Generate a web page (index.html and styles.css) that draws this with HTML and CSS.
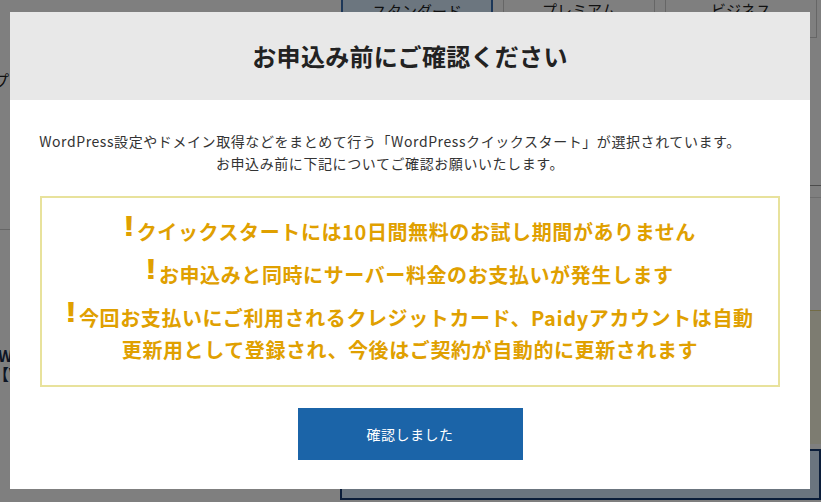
FILE: index.html
```html
<!DOCTYPE html>
<html lang="ja">
<head>
    <meta charset="UTF-8">
    <meta name="viewport" content="width=device-width, initial-scale=1.0">
    <title>お申込み前にご確認ください</title>
    <link rel="stylesheet" href="styles.css">
</head>
<body>
    <div class="page">
        <div class="side-left">
            <p class="cut-text top">プ</p>
            <div class="rule"></div>
            <p class="cut-text bold w1">W</p>
            <p class="cut-text bold w2">【V</p>
        </div>
        <div class="side-right">
            <div class="tabs">
                <div class="tab active">スタンダード</div>
                <div class="tab">プレミアム</div>
                <div class="tab">ビジネス</div>
            </div>
            <div class="rule dark r1"></div>
            <div class="rule r2"></div>
            <div class="note-box"></div>
            <div class="plan-box"></div>
        </div>
    </div>

    <div class="overlay">
        <div class="modal">
            <div class="modal-head">
                <h2>お申込み前にご確認ください</h2>
            </div>
            <div class="modal-body">
                <p class="lead">WordPress設定やドメイン取得などをまとめて行う「WordPressクイックスタート」が選択されています。<br>お申込み前に下記についてご確認お願いいたします。</p>
                <div class="warn-box">
                    <p><span class="mark">!</span>クイックスタートには10日間無料のお試し期間がありません</p>
                    <p><span class="mark">!</span>お申込みと同時にサーバー料金のお支払いが発生します</p>
                    <p><span class="mark">!</span>今回お支払いにご利用されるクレジットカード、Paidyアカウントは自動<br>更新用として登録され、今後はご契約が自動的に更新されます</p>
                </div>
                <button class="btn-ok">確認しました</button>
            </div>
        </div>
    </div>
</body>
</html>
```

FILE: styles.css
```css
body {
    margin: 0;
    font-family: "Noto Sans CJK JP", "Noto Sans", sans-serif;
    color: #222;
    overflow: hidden;
}
.page {
    display: grid;
    grid-template-columns: 340px 1fr;
    height: 502px;
    overflow: hidden;
    background: #fff;
}
.side-left {
    display: flex;
    flex-direction: column;
}
.cut-text {
    margin: 0;
    font-size: 16px;
    line-height: 18px;
    white-space: nowrap;
}
.cut-text.top {
    margin-top: 71px;
    margin-left: -7px;
}
.side-left .rule {
    margin-top: 140px;
    height: 1px;
    background: #ccc;
}
.cut-text.bold {
    font-weight: bold;
    color: #1a2a48;
}
.cut-text.w1 {
    margin-top: 116px;
    margin-left: -2px;
}
.cut-text.w2 {
    margin-left: -7px;
}
.side-right {
    display: flex;
    flex-direction: column;
}
.tabs {
    display: flex;
    gap: 10px;
    margin-top: -22px;
    padding-left: 1px;
}
.tab {
    width: 152px;
    height: 60px;
    flex-shrink: 0;
    box-sizing: border-box;
    border: 1px solid #ccc;
    text-align: center;
    font-size: 15px;
    padding-top: 20px;
}
.tab.active {
    background: #d8ecff;
    border: 2px solid #3a6fb0;
}
.side-right .rule {
    height: 1px;
    background: #ddd;
}
.side-right .rule.dark {
    background: #999;
}
.r1 {
    margin-top: 147px;
}
.r2 {
    margin-top: 11px;
}
.note-box {
    margin-top: 112px;
    height: 133px;
    background: #fbf8e2;
    border-top: 1px solid #e6d98a;
}
.plan-box {
    margin-top: 5px;
    height: 47px;
    background: #d6eaff;
    border: 2px solid #173a72;
}

.overlay {
    position: fixed;
    inset: 0;
    background: rgba(0, 0, 0, 0.5);
}
.modal {
    position: absolute;
    left: 10px;
    top: 12px;
    width: 800px;
    background: #fff;
}
.modal-head {
    background: #e8e8e8;
    height: 88px;
    display: flex;
    align-items: center;
    justify-content: center;
}
.modal-head h2 {
    margin: 0 0 2px;
    font-size: 24px;
    font-weight: bold;
    color: #222;
    letter-spacing: 0.3px;
}
.modal-body {
    padding: 30px 30px 29px;
    display: flex;
    flex-direction: column;
    align-items: center;
}
.lead {
    margin: 0 40px 0 0;
    white-space: nowrap;
    font-size: 14px;
    line-height: 22px;
    color: #333;
    text-align: center;
    letter-spacing: 0.58px;
}
.warn-box {
    margin-top: 22px;
    width: 740px;
    box-sizing: border-box;
    border: 2px solid #e8e29c;
    padding: 18px 10px 19px;
    text-align: center;
}
.warn-box p {
    margin: 0 0 11px;
    font-size: 20px;
    line-height: 32px;
    font-weight: bold;
    color: #e0a000;
    letter-spacing: 0.6px;
}
.warn-box p:last-child {
    margin-bottom: 0;
}
.mark {
    display: inline-block;
    font-family: "Liberation Sans", sans-serif;
    font-weight: 900;
    font-size: 30px;
    line-height: 20px;
    vertical-align: 4px;
    transform: scaleX(1.25);
    margin-right: 2px;
}
.btn-ok {
    margin-top: 21px;
    width: 225px;
    height: 52px;
    border: none;
    background: #1b64a8;
    color: #fff;
    font-family: "Noto Sans CJK JP", sans-serif;
    font-size: 14px;
    letter-spacing: 0.5px;
}
```
